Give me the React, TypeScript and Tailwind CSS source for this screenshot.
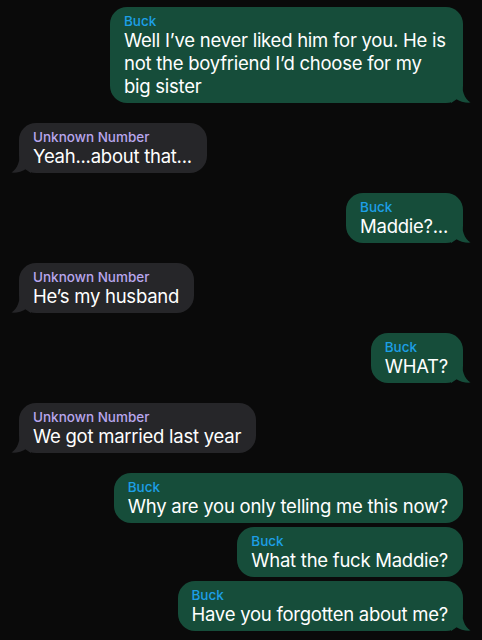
import React from "react";

type Msg = { from: "me" | "them"; text: string; tail: boolean; gap: "big" | "small" | "none" };

const msgs: Msg[] = [
  { from: "me", text: "Well I’ve never liked him for you. He is not the boyfriend I’d choose for my big sister", tail: true, gap: "none" },
  { from: "them", text: "Yeah...about that...", tail: true, gap: "big" },
  { from: "me", text: "Maddie?...", tail: true, gap: "big" },
  { from: "them", text: "He’s my husband", tail: true, gap: "big" },
  { from: "me", text: "WHAT?", tail: true, gap: "big" },
  { from: "them", text: "We got married last year", tail: true, gap: "big" },
  { from: "me", text: "Why are you only telling me this now?", tail: false, gap: "big" },
  { from: "me", text: "What the fuck Maddie?", tail: false, gap: "small" },
  { from: "me", text: "Have you forgotten about me?", tail: true, gap: "small" },
];

function Tail({ side, color }: { side: "left" | "right"; color: string }) {
  if (side === "right") {
    return (
      <svg className="absolute bottom-0 -right-[8px]" width="20" height="22" viewBox="0 0 20 22">
        <path d="M0 0 H11 C11 10 13 17 19.5 21.6 C14 22 9 20.5 5 18 C3.5 19.5 1.5 21 0 22 Z" fill={color} />
      </svg>
    );
  }
  return (
    <svg className="absolute bottom-0 -left-[8px]" width="20" height="22" viewBox="0 0 20 22">
      <path d="M20 0 H9 C9 10 7 17 0.5 21.6 C6 22 11 20.5 15 18 C16.5 19.5 18.5 21 20 22 Z" fill={color} />
    </svg>
  );
}

function Bubble({ m }: { m: Msg }) {
  const me = m.from === "me";
  const bg = me ? "#164d3a" : "#262629";
  return (
    <div
      className={`flex ${me ? "justify-end pr-[19px]" : "justify-start pl-[19px]"} ${
        m.gap === "big" ? "mt-[20px]" : m.gap === "small" ? "mt-[4px]" : "mt-0"
      }`}
    >
      <div
        className={`relative rounded-[17px] pl-[14px] pr-[15px] pt-[6px] pb-[5px] max-w-[353px] ${
          me ? "bg-[#164d3a]" : "bg-[#262629]"
        }`}
      >
        {m.tail && <Tail side={me ? "right" : "left"} color={bg} />}
        <div className="relative">
          <div
            className={`text-[13.5px] leading-[16px] font-medium ${me ? "text-[#1d9fe6]" : "text-[#b9a6ee]"}`}
          >
            {me ? "Buck" : "Unknown Number"}
          </div>
          <div className="text-[18.5px] leading-[23px] tracking-[-0.25px] text-white">{m.text}</div>
        </div>
      </div>
    </div>
  );
}

export default function App() {
  return (
    <div
      className="w-[482px] h-[640px] bg-[#0a0a0a] overflow-hidden pt-[7px]"
      style={{ fontFamily: "Inter, 'Noto Sans', sans-serif" }}
    >
      {msgs.map((m, i) => (
        <Bubble key={i} m={m} />
      ))}
    </div>
  );
}
